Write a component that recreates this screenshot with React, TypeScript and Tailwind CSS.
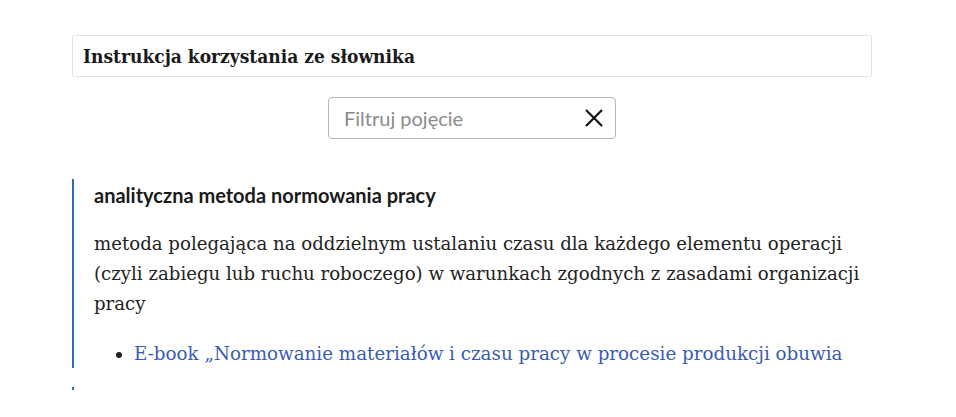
import React from "react";

export default function App() {
  return (
    <div className="w-[956px] h-[417px] bg-white overflow-hidden">
      <div className="ml-[72px] w-[800px] pt-[35px]">
        <div className="h-[42px] border border-[#e2e2e2] rounded-[2px] flex items-center px-[10px]">
          <span className="text-[19px] font-bold text-[#1a1a1a]" style={{ fontFamily: '"DejaVu Serif Condensed", "DejaVu Serif", serif', fontStretch: "condensed" }}>
            Instrukcja korzystania ze słownika
          </span>
        </div>
        <div className="flex justify-center mt-[20px]">
          <div className="w-[288px] h-[42px] border border-[#b5b5b5] rounded-[4px] flex items-center pl-[15px] pr-[11px]">
            <span className="flex-1 text-[20px] text-[#8a8a8a]" style={{ fontFamily: 'Lato, sans-serif' }}>
              Filtruj pojęcie
            </span>
            <svg width="20" height="20" viewBox="0 0 20 20" className="shrink-0">
              <path d="M2 2 L18 18 M18 2 L2 18" stroke="#111" strokeWidth="2.2" strokeLinecap="butt" fill="none" />
            </svg>
          </div>
        </div>
        <div className="mt-[40px] border-l-2 border-[#2a6fb6] pl-[20px] pt-[3px] h-[189px]">
          <div className="text-[20px] leading-[26px] font-bold text-[#1a1a1a]" style={{ fontFamily: 'Lato, sans-serif' }}>
            analityczna metoda normowania pracy
          </div>
          <p className="mt-[21px] text-[18.15px] leading-[30px] text-[#222]" style={{ fontFamily: '"DejaVu Serif", serif' }}>
            metoda polegająca na oddzielnym ustalaniu czasu dla każdego elementu operacji (czyli zabiegu lub ruchu roboczego) w warunkach zgodnych z zasadami organizacji pracy
          </p>
          <ul className="mt-[21px] list-disc pl-[40px] text-[18.3px] leading-[28px]" style={{ fontFamily: '"DejaVu Serif", serif' }}>
            <li className="text-[#222] marker:text-[#222]">
              <span className="text-[#3a5cae]">E-book „Normowanie materiałów i czasu pracy w procesie produkcji obuwia</span>
            </li>
          </ul>
        </div>
        <div className="mt-[19px] border-l-2 border-[#2a6fb6] h-[3px]" />
      </div>
    </div>
  );
}
